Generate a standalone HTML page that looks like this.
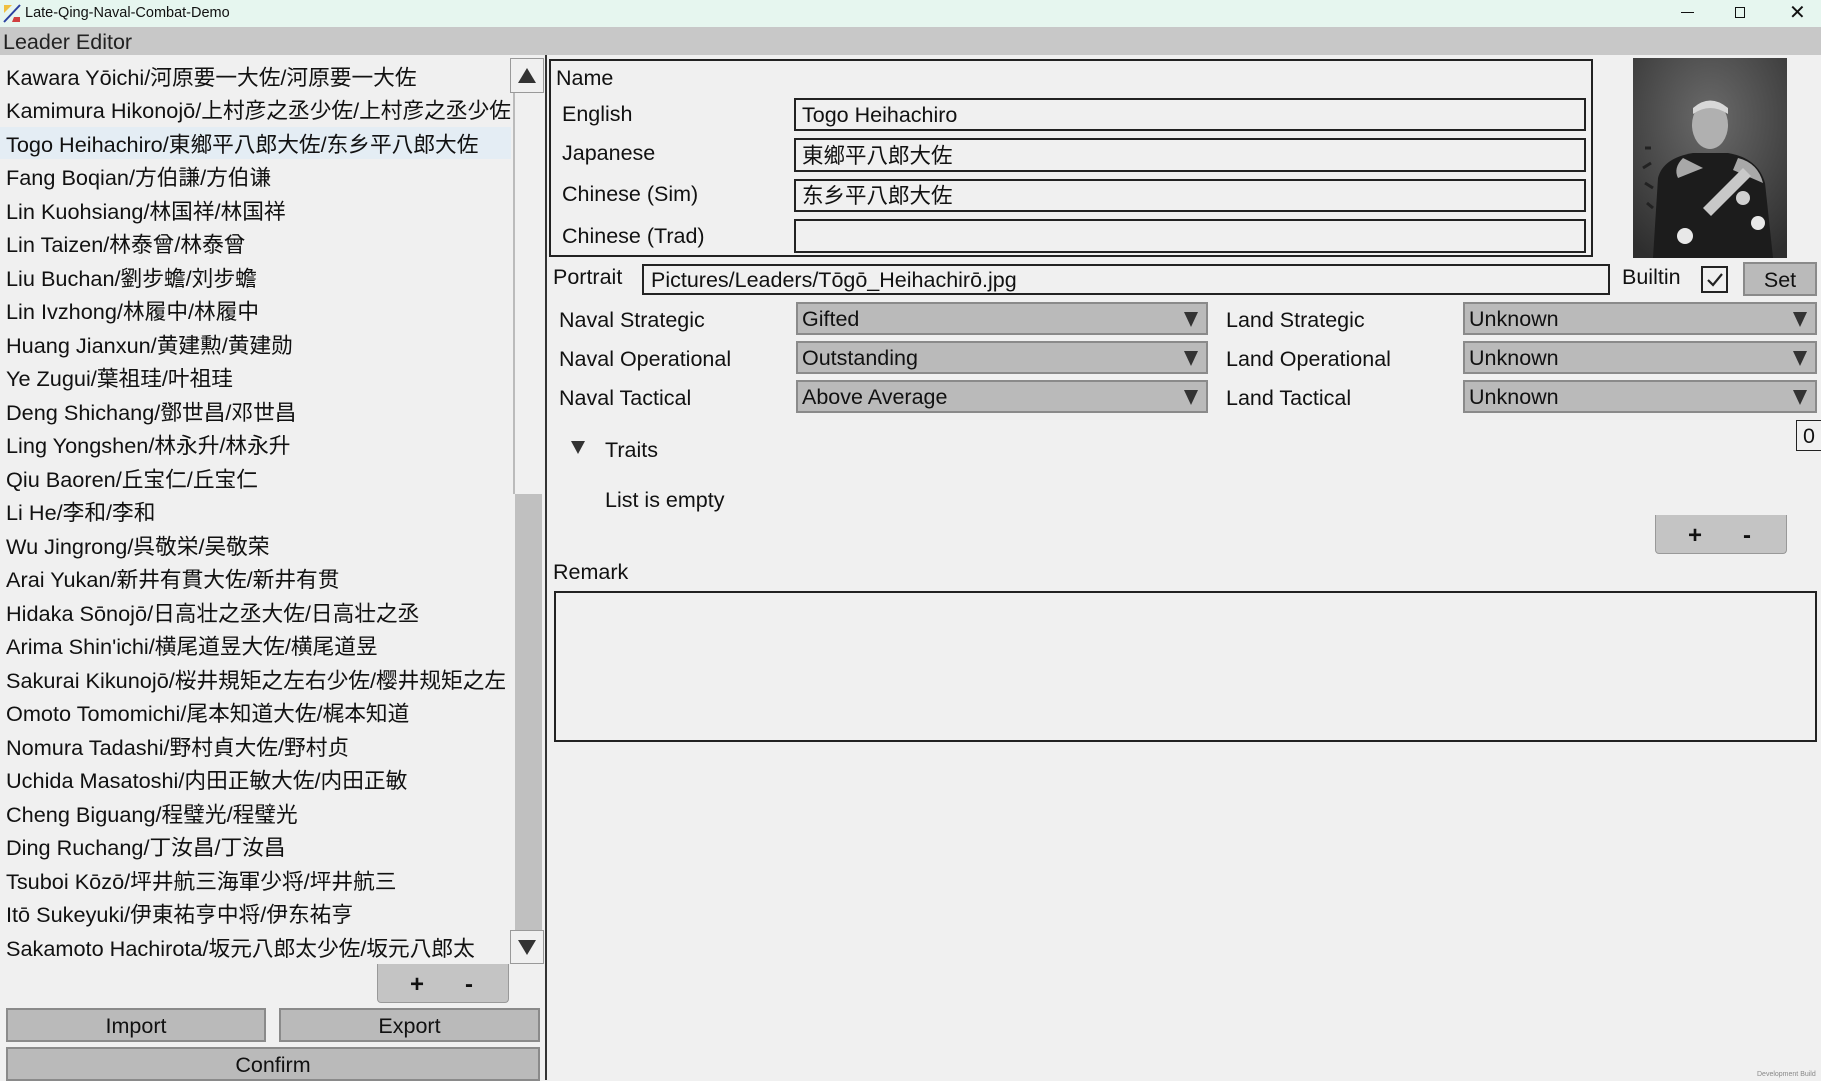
<!DOCTYPE html>
<html><head><meta charset="utf-8"><style>
*{box-sizing:border-box;margin:0;padding:0}
body{width:1821px;height:1080px;overflow:hidden;background:#f0f0f0;font-family:"Liberation Sans","Noto Sans CJK JP",sans-serif;color:#111;position:relative}
.a{position:absolute;white-space:nowrap}
.t{font-size:21.5px;line-height:24px}
.in{position:absolute;border:2px solid #222;background:#f0f0f0}
.dd{position:absolute;background:#bababa;border:2px solid #8a8a8a;font-size:21.5px;line-height:31px;padding-left:4px}
.dd:after{content:"";position:absolute;right:8px;top:8px;border-left:7px solid transparent;border-right:7px solid transparent;border-top:15px solid #333}
.btn{position:absolute;background:#bababa;border:2px solid #8a8a8a;font-size:21.5px;text-align:center}
.li{position:absolute;left:6px;font-size:21.7px;line-height:24px;white-space:nowrap}
</style></head><body>
<div class="a" style="left:0;top:0;width:1821px;height:27px;background:#e6f6ef"></div>
<svg class="a" style="left:2px;top:3px" width="20" height="20"><line x1="2" y1="19" x2="18" y2="2" stroke="#2a3fa0" stroke-width="2"/><path d="M2 2 L10 2 L2 10Z" fill="#f0c040"/><path d="M12 14 L18 14 L18 19 L10 19Z" fill="#d04040"/></svg>
<div class="a" style="left:25px;top:5px;font-size:14.5px">Late-Qing-Naval-Combat-Demo</div>
<div class="a" style="left:1681px;top:12px;width:13px;height:1px;background:#111"></div>
<div class="a" style="left:1735px;top:7px;width:10px;height:11px;border:1.5px solid #111"></div>
<div class="a" style="left:1789px;top:0px;font-size:20px">✕</div>
<div class="a" style="left:0;top:27px;width:1821px;height:28px;background:#c8c8c8"></div>
<div class="a" style="left:3px;top:29px;font-size:21.5px;line-height:26px;color:#222">Leader Editor</div>

<div class="a" style="left:0;top:127px;width:511px;height:32px;background:#e4edf4"></div>
<div class="li" style="top:66px">Kawara Yōichi/河原要一大佐/河原要一大佐</div>
<div class="li" style="top:99px">Kamimura Hikonojō/上村彦之丞少佐/上村彦之丞少佐</div>
<div class="li" style="top:133px">Togo Heihachiro/東鄉平八郎大佐/东乡平八郎大佐</div>
<div class="li" style="top:166px">Fang Boqian/方伯謙/方伯谦</div>
<div class="li" style="top:200px">Lin Kuohsiang/林国祥/林国祥</div>
<div class="li" style="top:233px">Lin Taizen/林泰曾/林泰曾</div>
<div class="li" style="top:267px">Liu Buchan/劉步蟾/刘步蟾</div>
<div class="li" style="top:300px">Lin Ivzhong/林履中/林履中</div>
<div class="li" style="top:334px">Huang Jianxun/黄建勲/黄建勋</div>
<div class="li" style="top:367px">Ye Zugui/葉祖珪/叶祖珪</div>
<div class="li" style="top:401px">Deng Shichang/鄧世昌/邓世昌</div>
<div class="li" style="top:434px">Ling Yongshen/林永升/林永升</div>
<div class="li" style="top:468px">Qiu Baoren/丘宝仁/丘宝仁</div>
<div class="li" style="top:501px">Li He/李和/李和</div>
<div class="li" style="top:535px">Wu Jingrong/呉敬栄/吴敬荣</div>
<div class="li" style="top:568px">Arai Yukan/新井有貫大佐/新井有贯</div>
<div class="li" style="top:602px">Hidaka Sōnojō/日高壮之丞大佐/日高壮之丞</div>
<div class="li" style="top:635px">Arima Shin'ichi/横尾道昱大佐/横尾道昱</div>
<div class="li" style="top:669px">Sakurai Kikunojō/桜井規矩之左右少佐/樱井规矩之左</div>
<div class="li" style="top:702px">Omoto Tomomichi/尾本知道大佐/梶本知道</div>
<div class="li" style="top:736px">Nomura Tadashi/野村貞大佐/野村贞</div>
<div class="li" style="top:769px">Uchida Masatoshi/内田正敏大佐/内田正敏</div>
<div class="li" style="top:803px">Cheng Biguang/程璧光/程璧光</div>
<div class="li" style="top:836px">Ding Ruchang/丁汝昌/丁汝昌</div>
<div class="li" style="top:870px">Tsuboi Kōzō/坪井航三海軍少将/坪井航三</div>
<div class="li" style="top:903px">Itō Sukeyuki/伊東祐亨中将/伊东祐亨</div>
<div class="li" style="top:937px">Sakamoto Hachirota/坂元八郎太少佐/坂元八郎太</div>

<div class="a" style="left:513px;top:93px;width:29px;height:401px;background:#f0f0f0;border-left:2px solid #bbb"></div>
<div class="a" style="left:515px;top:494px;width:27px;height:436px;background:#c0c0c0"></div>
<div class="a" style="left:510px;top:58px;width:34px;height:35px;border:1px solid #999;background:#f0f0f0"></div>
<div class="a" style="left:518px;top:68px;border-left:9px solid transparent;border-right:9px solid transparent;border-bottom:15px solid #333"></div>
<div class="a" style="left:510px;top:930px;width:34px;height:34px;border:1px solid #999;background:#f0f0f0"></div>
<div class="a" style="left:518px;top:940px;border-left:9px solid transparent;border-right:9px solid transparent;border-top:15px solid #333"></div>
<div class="a" style="left:545px;top:55px;width:2px;height:1025px;background:#333"></div>

<div class="a" style="left:377px;top:964px;width:132px;height:39px;background:#c4c4c4;border:1px solid #999;border-top:none;border-radius:0 0 4px 4px;font-size:24px;font-weight:bold;line-height:42px"><span style="position:absolute;left:32px">+</span><span style="position:absolute;left:87px">-</span></div>
<div class="btn" style="left:6px;top:1008px;width:260px;height:34px;line-height:32px">Import</div>
<div class="btn" style="left:279px;top:1008px;width:261px;height:34px;line-height:32px">Export</div>
<div class="btn" style="left:6px;top:1047px;width:534px;height:34px;line-height:32px">Confirm</div>

<div class="in" style="left:549px;top:59px;width:1044px;height:198px"></div>
<div class="a t" style="left:556px;top:66px">Name</div>
<div class="a t" style="left:562px;top:102px">English</div>
<div class="a t" style="left:562px;top:141px">Japanese</div>
<div class="a t" style="left:562px;top:182px">Chinese (Sim)</div>
<div class="a t" style="left:562px;top:224px">Chinese (Trad)</div>
<div class="in" style="left:794px;top:98px;width:792px;height:33px;font-size:21.5px;line-height:31px;padding-left:6px">Togo Heihachiro</div>
<div class="in" style="left:794px;top:138px;width:792px;height:34px;font-size:21.5px;line-height:32px;padding-left:6px">東鄉平八郎大佐</div>
<div class="in" style="left:794px;top:179px;width:792px;height:33px;font-size:21.5px;line-height:31px;padding-left:6px">东乡平八郎大佐</div>
<div class="in" style="left:794px;top:219px;width:792px;height:34px"></div>

<svg class="a" style="left:1633px;top:58px" width="154" height="200">
<defs><radialGradient id="g" cx="0.5" cy="0.3" r="0.8"><stop offset="0" stop-color="#6a6a6a"/><stop offset="1" stop-color="#2e2e2e"/></radialGradient></defs>
<rect width="154" height="200" fill="url(#g)"/>
<path d="M20 200 L25 120 Q30 100 60 95 L95 95 Q125 100 132 125 L140 200Z" fill="#1c1c1c"/>
<ellipse cx="77" cy="67" rx="18" ry="24" fill="#b0b0b0"/>
<path d="M60 50 Q77 35 95 50 L95 56 Q77 44 60 56Z" fill="#d8d8d8"/>
<path d="M50 100 Q40 110 45 120 L70 110Z M105 100 Q125 105 130 125 L100 112Z" fill="#a8a8a8"/>
<path d="M70 150 L110 110 L118 118 L78 158Z" fill="#c8c8c8"/>
<circle cx="110" cy="140" r="7" fill="#d0d0d0"/><circle cx="52" cy="178" r="8" fill="#e8e8e8"/><circle cx="125" cy="165" r="7" fill="#e8e8e8"/>
<path d="M12 90 L18 90 M10 110 L18 105 M12 125 L20 130 M14 145 L20 150" stroke="#222" stroke-width="3"/>
</svg>

<div class="a t" style="left:553px;top:265px">Portrait</div>
<div class="in" style="left:642px;top:264px;width:968px;height:31px;font-size:21.5px;line-height:29px;padding-left:7px">Pictures/Leaders/Tōgō_Heihachirō.jpg</div>
<div class="a t" style="left:1622px;top:265px">Builtin</div>
<div class="a" style="left:1701px;top:266px;width:27px;height:27px;border:2px solid #222"></div>
<svg class="a" style="left:1704px;top:269px" width="22" height="22"><path d="M4 11 L9 16 L18 5" stroke="#222" stroke-width="2.2" fill="none"/></svg>
<div class="btn" style="left:1743px;top:262px;width:74px;height:34px;line-height:32px">Set</div>

<div class="a t" style="left:559px;top:308px">Naval Strategic</div>
<div class="a t" style="left:559px;top:347px">Naval Operational</div>
<div class="a t" style="left:559px;top:386px">Naval Tactical</div>
<div class="dd" style="left:796px;top:302px;width:412px;height:33px">Gifted</div>
<div class="dd" style="left:796px;top:341px;width:412px;height:33px">Outstanding</div>
<div class="dd" style="left:796px;top:380px;width:412px;height:33px">Above Average</div>
<div class="a t" style="left:1226px;top:308px">Land Strategic</div>
<div class="a t" style="left:1226px;top:347px">Land Operational</div>
<div class="a t" style="left:1226px;top:386px">Land Tactical</div>
<div class="dd" style="left:1463px;top:302px;width:354px;height:33px">Unknown</div>
<div class="dd" style="left:1463px;top:341px;width:354px;height:33px">Unknown</div>
<div class="dd" style="left:1463px;top:380px;width:354px;height:33px">Unknown</div>

<div class="a" style="left:571px;top:441px;border-left:7px solid transparent;border-right:7px solid transparent;border-top:13px solid #333"></div>
<div class="a t" style="left:605px;top:438px">Traits</div>
<div class="a t" style="left:605px;top:488px">List is empty</div>
<div class="a" style="left:1796px;top:420px;width:26px;height:31px;border:1.5px solid #222;font-size:21.5px;line-height:30px;padding-left:6px">0</div>
<div class="a" style="left:1655px;top:515px;width:132px;height:39px;background:#c4c4c4;border:1px solid #999;border-top:none;border-radius:0 0 4px 4px;font-size:24px;font-weight:bold;line-height:42px"><span style="position:absolute;left:32px">+</span><span style="position:absolute;left:87px">-</span></div>

<div class="a t" style="left:553px;top:560px">Remark</div>
<div class="in" style="left:554px;top:591px;width:1263px;height:151px"></div>
<div class="a" style="left:1757px;top:1071px;font-size:7px;color:#888">Development Build</div>
</body></html>
